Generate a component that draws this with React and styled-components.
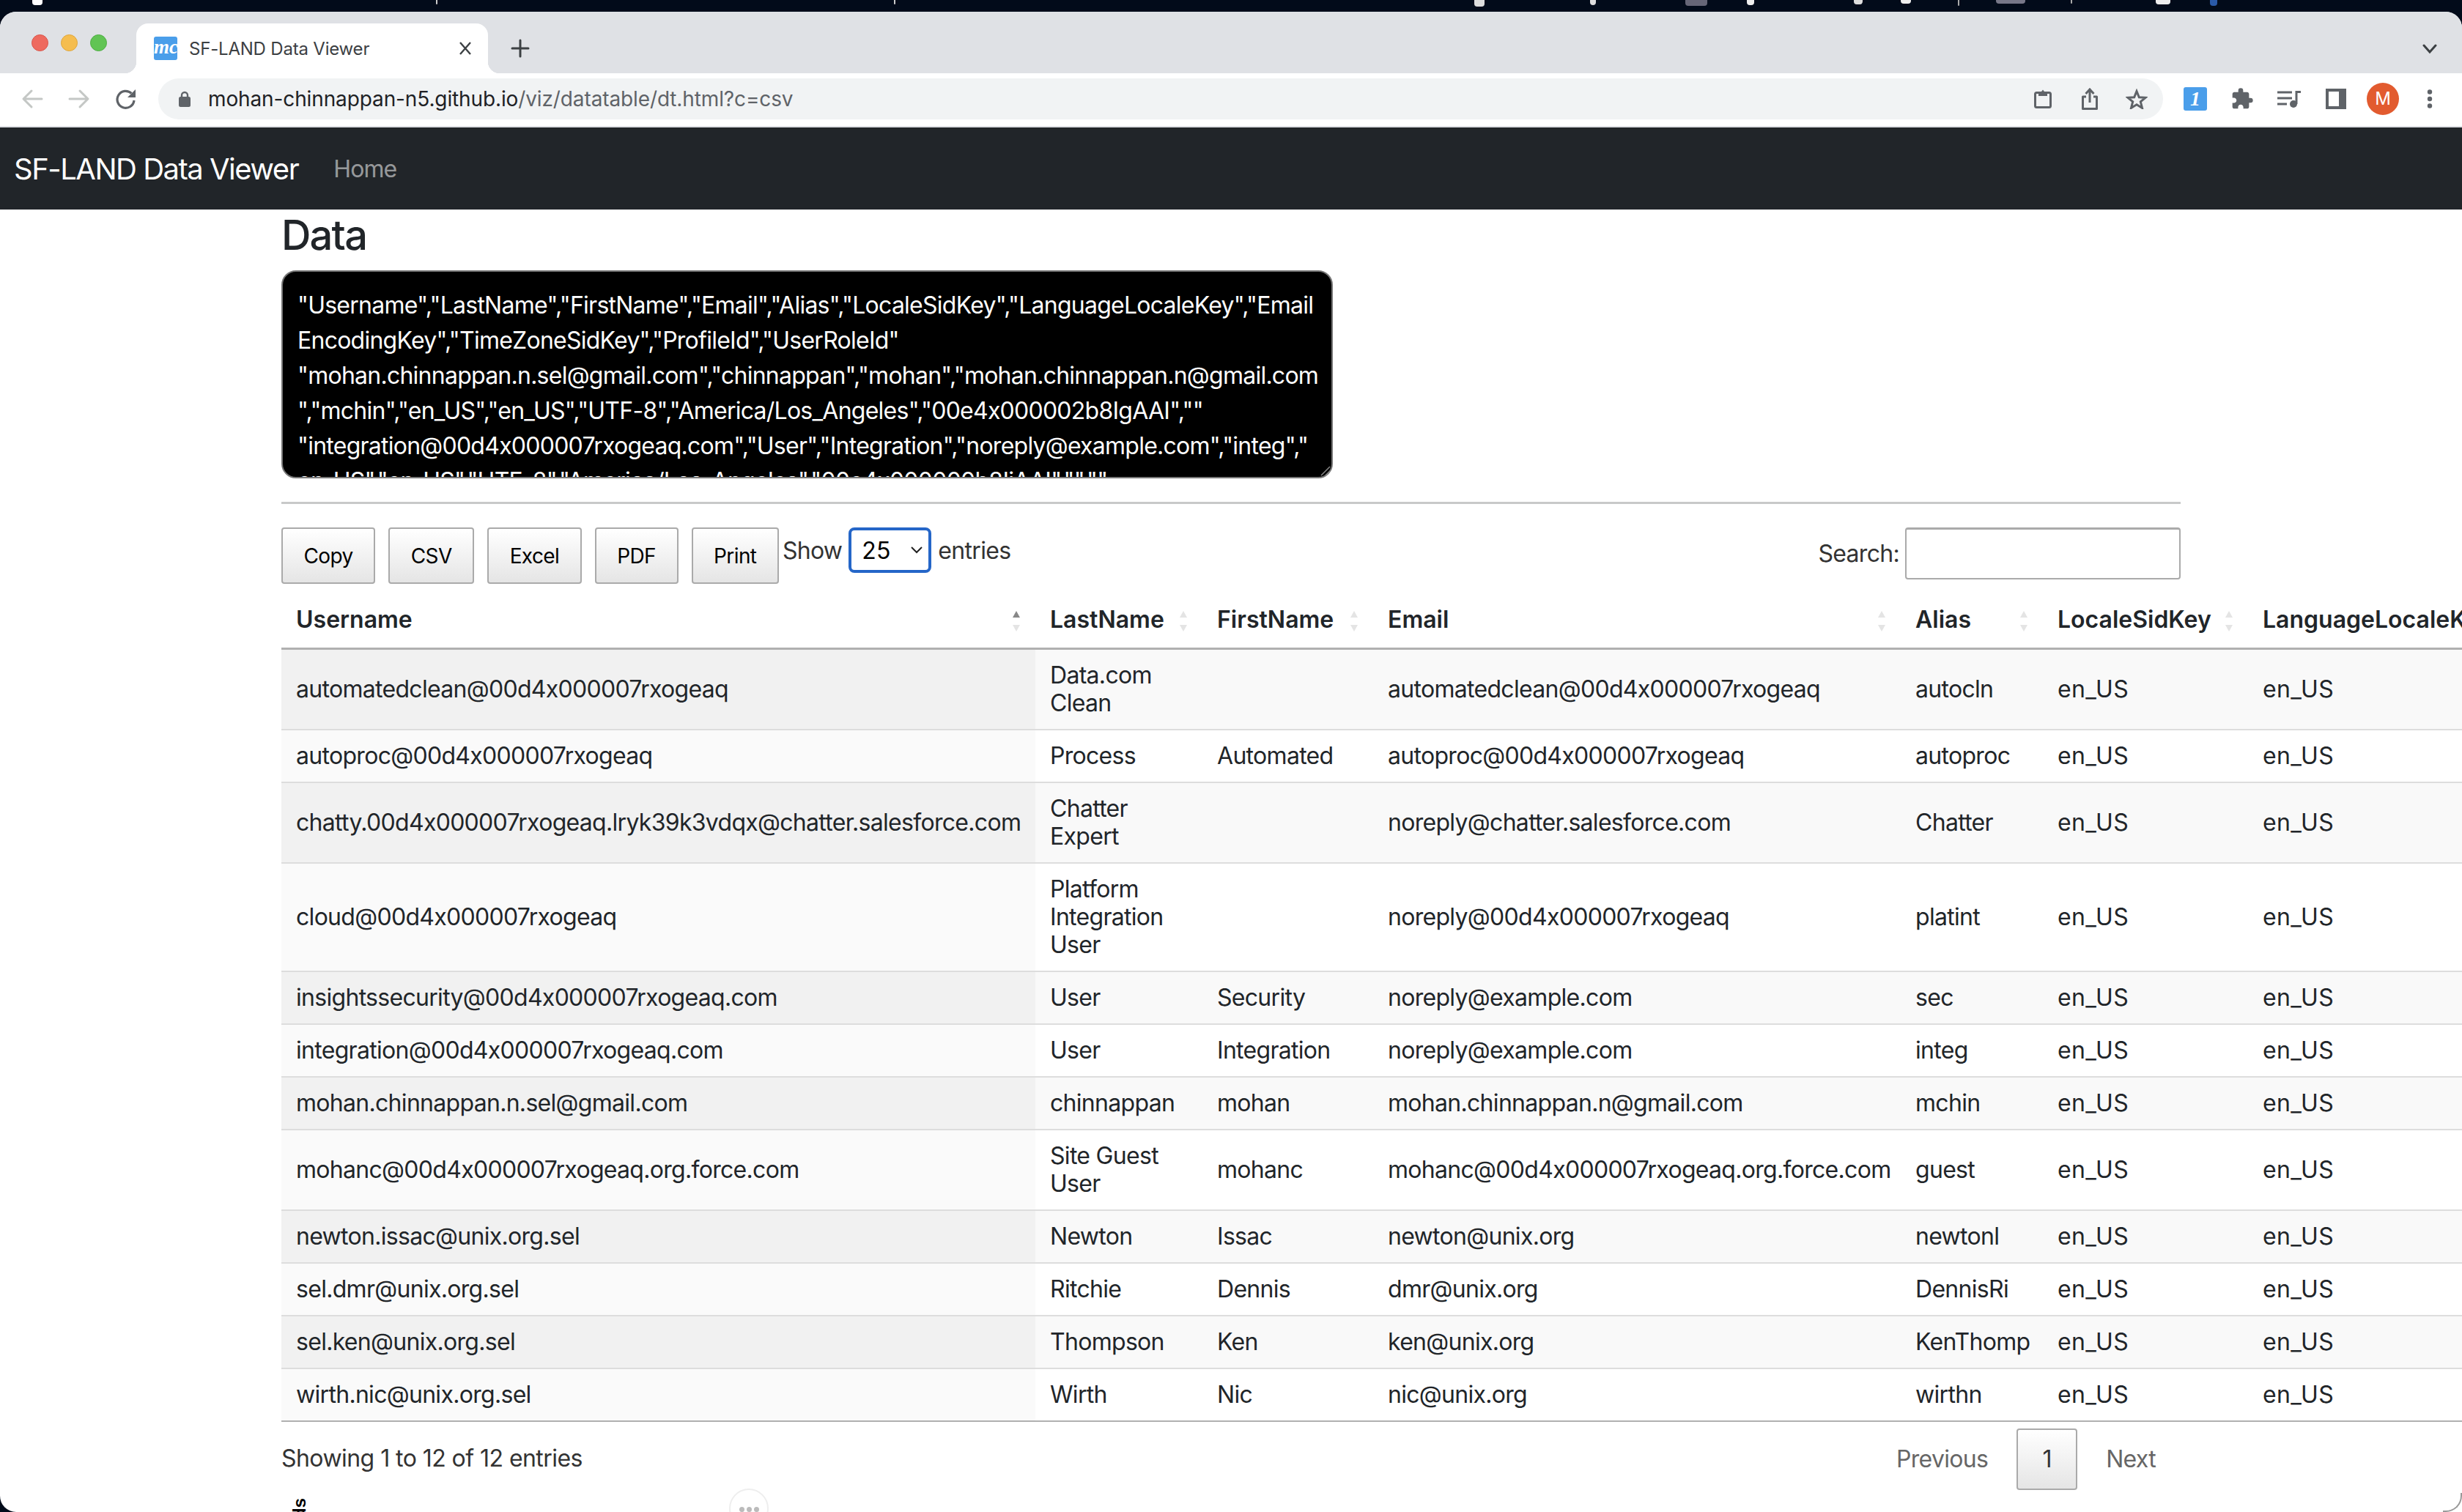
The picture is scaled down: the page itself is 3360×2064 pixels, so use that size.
import React from 'react';
import styled, { createGlobalStyle } from 'styled-components';
import { MdExtension } from 'react-icons/md';

const Global = createGlobalStyle`
  html, body { margin: 0; padding: 0; height: 2064px; overflow: hidden; background: #020b1a; }
  * { box-sizing: border-box; }
  body { font-family: Inter, "Liberation Sans", sans-serif; font-feature-settings: "calt" 0; color: #212529; }
`;

const Page = styled.div`width: 3360px; height: 2064px; display: flex; flex-direction: column; overflow: hidden; position: relative;`;
const MenuBar = styled.div`height: 16px; flex: none; background: #020b1a; position: relative;`;
const Speck = styled.span`position: absolute; top: 0; left: ${p => p.$x}px; width: ${p => p.$w}px; height: ${p => p.$h}px; background: ${p => p.$c}; border-radius: 0 0 4px 4px;`;
const Win = styled.div`
  flex: 1; min-height: 0; background: #fff; border-radius: 22px 22px 0 22px; overflow: hidden; display: flex; flex-direction: column; position: relative;
  &::after { content: ""; position: absolute; right: 0; bottom: 0; width: 24px; height: 24px; border-right: 2px solid #999; border-bottom: 2px solid #999; border-bottom-right-radius: 22px; }
`;

const TabStrip = styled.div`height: 84px; flex: none; background: #dfe1e5; display: flex; align-items: flex-end; padding-left: 43px; position: relative;`;
const Lights = styled.div`display: flex; gap: 17px; align-self: flex-start; margin-top: 31px; width: 143px; flex: none;`;
const Light = styled.span`width: 23px; height: 23px; border-radius: 50%; background: ${p => p.$c}; border: 1px solid ${p => p.$b}; flex: none;`;
const Tab = styled.div`
  width: 480px; height: 68px; background: #fff; border-radius: 16px 16px 0 0; display: flex; align-items: center; padding: 0 22px 0 24px; color: #3c4043; font-size: 24px; letter-spacing: -0.2px; position: relative;
  &::before, &::after { content: ""; position: absolute; bottom: 0; width: 16px; height: 16px; }
  &::before { left: -16px; background: radial-gradient(circle at 0 0, #dfe1e5 16px, #fff 16.5px); }
  &::after { right: -16px; background: radial-gradient(circle at 100% 0, #dfe1e5 16px, #fff 16.5px); }
`;
const Favicon = styled.span`width: 32px; height: 32px; border-radius: 3px; background: #4a9eea; color: #fff; font: italic 700 27px/29px "Liberation Serif", serif; letter-spacing: 0; text-align: center; margin-right: 16px; flex: none;`;
const TabTitle = styled.span`flex: 1; white-space: nowrap;`;
const Plus = styled.div`margin-left: 31px; margin-bottom: 14px; height: 40px; display: flex; align-items: center;`;
const Chevron = styled.div`position: absolute; right: 34px; top: 44px; display: flex;`;

const Toolbar = styled.div`height: 74px; flex: none; background: #fff; border-bottom: 2px solid #dfe1e5; display: flex; align-items: center; padding: 0 0 2px 28px;`;
const Nav = styled.div`display: flex; gap: 32px; width: 188px; flex: none;`;
const Address = styled.div`width: 2736px; height: 56px; border-radius: 28px; background: #f1f3f4; display: flex; align-items: center; padding: 0 4px 0 28px; flex: none;`;
const Url = styled.div`flex: 1; margin-left: 24px; font-size: 28px; letter-spacing: -0.12px; color: #202124; white-space: nowrap;`;
const UrlRest = styled.span`color: #5f6368;`;
const IconRow = styled.div`display: grid; grid-auto-flow: column; grid-auto-columns: 64px; justify-items: center; align-items: center; margin-left: ${p => p.$ml || 0}px;`;
const OnePass = styled.span`width: 32px; height: 32px; border-radius: 3px; background: #4a9eea; color: #fff; font: italic 700 28px/32px "Liberation Serif", serif; text-align: center;`;
const Avatar = styled.span`width: 44px; height: 44px; border-radius: 50%; background: #e25b2f; color: #fff; font-size: 24px; line-height: 44px; text-align: center;`;

const NavBar = styled.div`height: 112px; flex: none; background: #212529; display: flex; align-items: center; padding-left: 19px;`;
const Brand = styled.div`color: #fff; font-size: 40px; letter-spacing: -1.5px;`;
const NavLink = styled.div`color: rgba(255,255,255,.55); font-size: 32px; letter-spacing: -0.9px; margin-left: 48px;`;

const Container = styled.div`margin-left: 384px; width: 2592px; position: relative; letter-spacing: -0.7px;`;
const Title = styled.h3`margin: 0; font-size: 56px; line-height: 71px; font-weight: 500; height: 83px; letter-spacing: -1.8px;`;
const DataWrap = styled.div`position: relative; width: 1435px; height: 284px;`;
const DataBox = styled.textarea`
  display: block; width: 100%; height: 100%; background: #000; color: #fff; border: 2px solid #767676; border-radius: 20px; resize: none;
  font: 32px/48px Inter, "Liberation Sans", sans-serif; font-feature-settings: "calt" 0; letter-spacing: -0.75px; padding: 22px 20px; overflow: hidden; outline: none;
`;
const Grip = styled.svg`position: absolute; right: 3px; bottom: 3px;`;
const Rule = styled.hr`margin: 32px 0; border: 0; border-top: 3px solid #c8c9c9;`;
const Controls = styled.div`display: flex; align-items: flex-start; height: 85px;`;
const Btn = styled.button`
  height: 77px; padding: 0 28.5px; margin-right: 18px; border: 2px solid #aaa; border-radius: 4px; color: #000;
  background: linear-gradient(#fff, #e5e5e5); font: 28px Inter, "Liberation Sans", sans-serif; font-feature-settings: "calt" 0; letter-spacing: -0.6px;
  &:last-of-type { margin-right: 5px; }
`;
const Length = styled.div`display: flex; align-items: center; height: 62px; color: #333; font-size: 32px; gap: 9px;`;
const Select = styled.div`
  width: 113px; height: 62px; border: 4px solid #2566c8; border-radius: 8px; color: #000; display: flex; align-items: center; justify-content: space-between;
  padding: 0 8px 0 14px; background: #fff; letter-spacing: 0;
`;
const Search = styled.div`margin-left: auto; display: flex; align-items: center; color: #333; font-size: 32px; gap: 8px; height: 71px;`;
const SearchInput = styled.div`width: 376px; height: 71px; border: 2px solid #aaa; border-top-width: 3px; border-radius: 4px;`;

const Table = styled.table`border-collapse: collapse; table-layout: fixed; width: 3200px; font-size: 32px; line-height: 38px;`;
const Th = styled.th`
  height: 80px; text-align: left; font-weight: 600; letter-spacing: 0; padding: 4px 36px 0 20px; border-bottom: 3px solid #b0b0b0; position: relative; white-space: nowrap;
`;
const Td = styled.td`
  padding: 16px 20px; border-bottom: 2px solid ${p => p.$last ? '#b0b0b0' : '#ddd'}; background: ${p => p.$bg};
  white-space: ${p => p.$wrap ? 'normal' : 'nowrap'};
  letter-spacing: ${p => p.$locale ? '0.4px' : 'inherit'};
`;
const SortIcon = styled.span`position: absolute; right: 21px; top: 29px; display: flex; flex-direction: column; gap: 10px;`;
const Tri = styled.span`
  width: 0; height: 0; border-left: 5px solid transparent; border-right: 5px solid transparent;
  ${p => p.$down ? `border-top: 9px solid ${p.$c};` : `border-bottom: 9px solid ${p.$c};`}
`;

const Footer = styled.div`display: flex; align-items: flex-start; justify-content: space-between; padding-top: 9px;`;
const Info = styled.div`font-size: 32px; color: #333; margin-top: 21px; letter-spacing: -0.55px;`;
const Pager = styled.div`display: flex; align-items: center; font-size: 32px; color: #666; margin-right: 34px;`;
const PageBtn = styled.div`
  width: 83px; height: 84px; margin: 0 39px; border: 2px solid #aaa; border-radius: 4px; color: #333;
  background: linear-gradient(#fff, #e5e5e5); display: flex; align-items: center; justify-content: center;
`;
const SideText = styled.div`position: absolute; left: 398px; top: 2045px; font: 700 24px/22px "Liberation Sans", sans-serif; color: #000; writing-mode: vertical-rl; transform: rotate(180deg); white-space: nowrap;`;
const Bubble = styled.div`position: absolute; left: 995px; top: 2032px; width: 54px; height: 54px; border-radius: 50%; border: 2px solid #eee; background: #fff; display: flex; justify-content: center; gap: 3px; padding-top: 23px;`;
const BubbleDot = styled.span`width: 7px; height: 7px; border-radius: 50%; background: #bbb;`;

const csv = `"Username","LastName","FirstName","Email","Alias","LocaleSidKey","LanguageLocaleKey","Email
EncodingKey","TimeZoneSidKey","ProfileId","UserRoleId"
"mohan.chinnappan.n.sel@gmail.com","chinnappan","mohan","mohan.chinnappan.n@gmail.com
","mchin","en_US","en_US","UTF-8","America/Los_Angeles","00e4x000002b8IgAAI",""
"integration@00d4x000007rxogeaq.com","User","Integration","noreply@example.com","integ","
en_US","en_US","UTF-8","America/Los_Angeles","00e4x000000b8IiAAI","",""`;

const cols = [
  ['Username', 1029], ['LastName', 228], ['FirstName', 233], ['Email', 720], ['Alias', 194], ['LocaleSidKey', 280], ['LanguageLocaleKey', 516],
];
const rows = [
  ['automatedclean@00d4x000007rxogeaq', 'Data.com Clean', '', 'automatedclean@00d4x000007rxogeaq', 'autocln'],
  ['autoproc@00d4x000007rxogeaq', 'Process', 'Automated', 'autoproc@00d4x000007rxogeaq', 'autoproc'],
  ['chatty.00d4x000007rxogeaq.lryk39k3vdqx@chatter.salesforce.com', 'Chatter Expert', '', 'noreply@chatter.salesforce.com', 'Chatter'],
  ['cloud@00d4x000007rxogeaq', 'Platform Integration User', '', 'noreply@00d4x000007rxogeaq', 'platint'],
  ['insightssecurity@00d4x000007rxogeaq.com', 'User', 'Security', 'noreply@example.com', 'sec'],
  ['integration@00d4x000007rxogeaq.com', 'User', 'Integration', 'noreply@example.com', 'integ'],
  ['mohan.chinnappan.n.sel@gmail.com', 'chinnappan', 'mohan', 'mohan.chinnappan.n@gmail.com', 'mchin'],
  ['mohanc@00d4x000007rxogeaq.org.force.com', 'Site Guest User', 'mohanc', 'mohanc@00d4x000007rxogeaq.org.force.com', 'guest'],
  ['newton.issac@unix.org.sel', 'Newton', 'Issac', 'newton@unix.org', 'newtonl'],
  ['sel.dmr@unix.org.sel', 'Ritchie', 'Dennis', 'dmr@unix.org', 'DennisRi'],
  ['sel.ken@unix.org.sel', 'Thompson', 'Ken', 'ken@unix.org', 'KenThomp'],
  ['wirth.nic@unix.org.sel', 'Wirth', 'Nic', 'nic@unix.org', 'wirthn'],
];

const specks = [
  [44, 14, 7, '#fff'], [595, 2, 6, '#ccc'], [1220, 2, 6, '#ccc'], [2012, 14, 9, '#ddd'], [2170, 8, 7, '#ddd'], [2300, 30, 8, '#667'],
  [2384, 10, 7, '#eee'], [2530, 12, 6, '#ddd'], [2594, 14, 5, '#eee'], [2672, 2, 8, '#aaa'], [2724, 40, 5, '#778'], [2826, 2, 5, '#aaa'], [2942, 20, 6, '#eee'], [3016, 10, 8, '#2a5aa8'],
];

const Icon = ({ w = 32, h = 32, children, ...p }) => (
  <svg width={w} height={h} viewBox={`0 0 ${w} ${h}`} fill="none" {...p}>{children}</svg>
);

export default function App() {
  return (
    <Page>
      <Global />
      <MenuBar>
        {specks.map(([x, w, h, c]) => <Speck key={x} $x={x} $w={w} $h={h} $c={c} />)}
      </MenuBar>
      <Win>
        <TabStrip>
          <Lights>
            <Light $c="#ee6a5f" $b="#d9564c" /><Light $c="#f5bd4f" $b="#dfa63c" /><Light $c="#61c454" $b="#4fae44" />
          </Lights>
          <Tab>
            <Favicon>mc</Favicon>
            <TabTitle>SF-LAND Data Viewer</TabTitle>
            <Icon w={18} h={18}><path d="M2 1l14 16M16 1L2 17" stroke="#3c4043" strokeWidth="2.4" /></Icon>
          </Tab>
          <Plus><Icon w={26} h={26}><path d="M13 2v22M2 13h22" stroke="#3c4043" strokeWidth="3" strokeLinecap="round" /></Icon></Plus>
          <Chevron><Icon w={20} h={14}><path d="M2 2l8 9 8-9" stroke="#3c4043" strokeWidth="3" strokeLinecap="round" /></Icon></Chevron>
        </TabStrip>
        <Toolbar>
          <Nav>
            <Icon><path d="M29 16H5M15 5L4 16l11 11" stroke="#c4c7c5" strokeWidth="3" strokeLinecap="round" strokeLinejoin="round" /></Icon>
            <Icon><path d="M3 16h24M17 5l11 11-11 11" stroke="#c4c7c5" strokeWidth="3" strokeLinecap="round" strokeLinejoin="round" /></Icon>
            <Icon><path d="M27 18a11.5 11.5 0 1 1-3.6-9.6" stroke="#5f6368" strokeWidth="3.2" /><path d="M29 3v11H18z" fill="#5f6368" /></Icon>
          </Nav>
          <Address>
            <Icon w={16} h={22}><path d="M4 9V6a4 4 0 0 1 8 0v3" stroke="#5f6368" strokeWidth="2.4" /><rect y="8" width="16" height="14" rx="2.5" fill="#5f6368" /></Icon>
            <Url>mohan-chinnappan-n5.github.io<UrlRest>/viz/datatable/dt.html?c=csv</UrlRest></Url>
            <IconRow>
              <Icon w={24} h={26}>
                <rect x="1.5" y="4.5" width="21" height="20" rx="2" stroke="#5f6368" strokeWidth="3" />
                <path d="M6 3h4l2-2.5L14 3h4v6H6z" fill="#5f6368" />
              </Icon>
              <Icon w={22} h={30}>
                <path d="M6 12H1.5v16.500h19V12H16" stroke="#5f6368" strokeWidth="3" strokeLinejoin="round" />
                <path d="M11 20V3M5.500 8L11 2l5.500 6" stroke="#5f6368" strokeWidth="3" />
              </Icon>
              <Icon w={30} h={28}>
                <path d="M15 3.500l3.300 8.200 8.700.6-6.700 5.600 2.200 8.500-7.500-4.700-7.500 4.700 2.200-8.500L3 12.300l8.700-.6z" stroke="#5f6368" strokeWidth="3" />
              </Icon>
            </IconRow>
          </Address>
          <IconRow $ml={12}>
            <OnePass>1</OnePass>
            <MdExtension size={32} color="#5f6368" />
            <Icon w={32} h={24}>
              <path d="M0 3h20M0 11h20M0 19h13" stroke="#5f6368" strokeWidth="3" />
              <path d="M26 19V2.500h6" stroke="#5f6368" strokeWidth="3" />
              <circle cx="22" cy="19" r="5" fill="#5f6368" />
            </Icon>
            <Icon w={28} h={28}><path fillRule="evenodd" d="M0 0h28v28H0zM4 4v20h14V4z" fill="#5f6368" /></Icon>
            <Avatar>M</Avatar>
            <Icon w={8} h={26}>
              <circle cx="4" cy="3.500" r="3.200" fill="#5f6368" /><circle cx="4" cy="13" r="3.200" fill="#5f6368" /><circle cx="4" cy="22.500" r="3.200" fill="#5f6368" />
            </Icon>
          </IconRow>
        </Toolbar>
        <NavBar>
          <Brand>SF-LAND Data Viewer</Brand>
          <NavLink>Home</NavLink>
        </NavBar>
        <Container>
          <Title>Data</Title>
          <DataWrap>
            <DataBox readOnly wrap="off" value={csv} />
            <Grip width="14" height="14" viewBox="0 0 14 14"><path d="M13 1L1 13M13 7l-6 6" stroke="#888" strokeWidth="1.500" /></Grip>
          </DataWrap>
          <Rule />
          <Controls>
            {['Copy', 'CSV', 'Excel', 'PDF', 'Print'].map(b => <Btn key={b}>{b}</Btn>)}
            <Length>
              Show
              <Select>
                25
                <Icon w={16} h={10}><path d="M1 1l7 7 7-7" stroke="#222" strokeWidth="2" /></Icon>
              </Select>
              entries
            </Length>
            <Search>Search:<SearchInput /></Search>
          </Controls>
          <Table>
            <colgroup>{cols.map(([n, w]) => <col key={n} style={{ width: w }} />)}</colgroup>
            <thead>
              <tr>
                {cols.map(([n], i) => (
                  <Th key={n}>
                    {n}
                    {n !== 'LanguageLocaleKey' && (
                      <SortIcon>
                        <Tri $c={i === 0 ? '#888' : '#e4e4e4'} />
                        <Tri $down $c="#e4e4e4" />
                      </SortIcon>
                    )}
                  </Th>
                ))}
              </tr>
            </thead>
            <tbody>
              {rows.map((r, ri) => {
                const odd = ri % 2 === 0;
                const last = ri === rows.length - 1;
                const bg = odd ? '#f9f9f9' : '#fff';
                return (
                  <tr key={r[0]}>
                    <Td $last={last} $bg={odd ? '#f1f1f1' : '#fafafa'}>{r[0]}</Td>
                    <Td $last={last} $wrap $bg={bg}>{r[1]}</Td>
                    <Td $last={last} $bg={bg}>{r[2]}</Td>
                    <Td $last={last} $bg={bg}>{r[3]}</Td>
                    <Td $last={last} $bg={bg}>{r[4]}</Td>
                    <Td $last={last} $locale $bg={bg}>en_US</Td>
                    <Td $last={last} $locale $bg={bg}>en_US</Td>
                  </tr>
                );
              })}
            </tbody>
          </Table>
          <Footer>
            <Info>Showing 1 to 12 of 12 entries</Info>
            <Pager>Previous<PageBtn>1</PageBtn>Next</Pager>
          </Footer>
        </Container>
      </Win>
      <SideText>ds</SideText>
      <Bubble><BubbleDot /><BubbleDot /><BubbleDot /></Bubble>
    </Page>
  );
}
